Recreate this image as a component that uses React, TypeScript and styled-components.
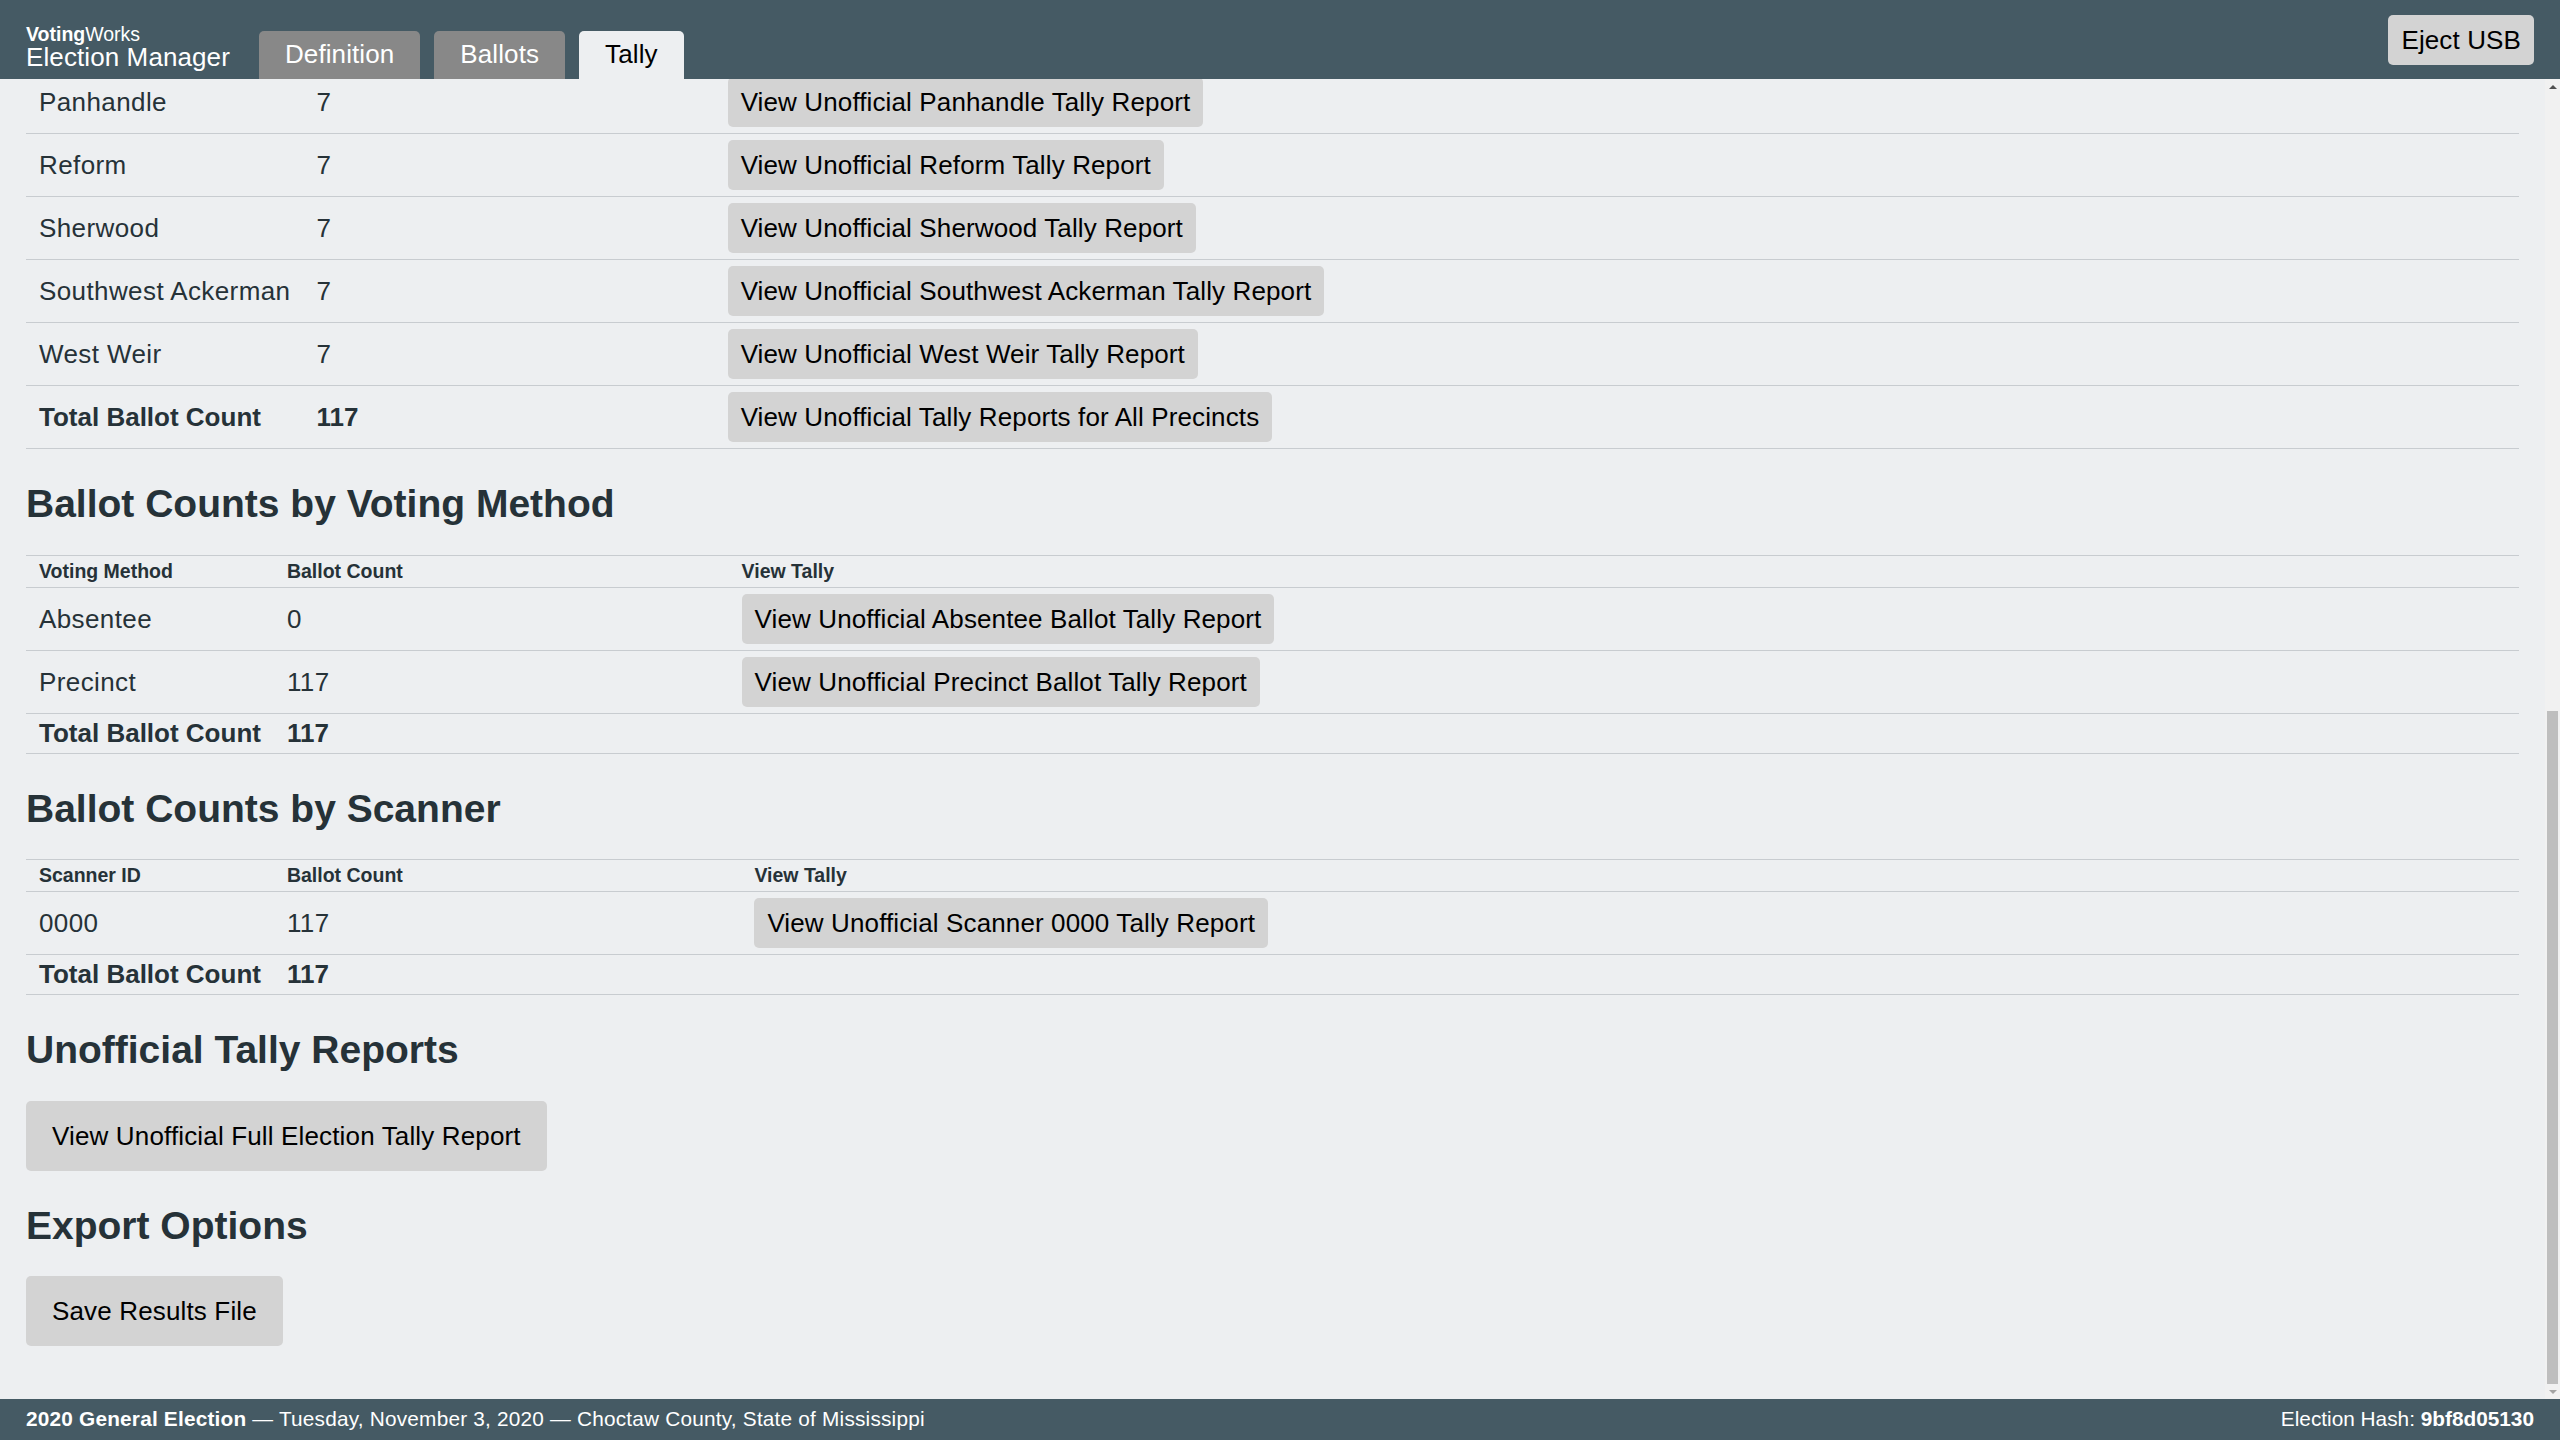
import React, { useLayoutEffect, useRef, useState } from 'react';
import styled, { createGlobalStyle } from 'styled-components';

const GlobalStyle = createGlobalStyle`
  html, body {
    margin: 0;
    height: 100%;
  }
  body {
    font-family: "Liberation Sans", Arial, Helvetica, sans-serif;
    font-size: 26px;
    color: #263238;
    background: #edeff1;
  }
  #root {
    height: 100%;
  }
`;

const Screen = styled.div`
  display: flex;
  flex-direction: column;
  height: 100%;
`;

const Header = styled.header`
  display: flex;
  align-items: flex-end;
  flex-shrink: 0;
  height: 79px;
  padding: 0 26px;
  box-sizing: border-box;
  background: #455a64;
  color: #ffffff;
`;

const Brand = styled.div`
  margin-bottom: 9px;
  line-height: 1;
`;

const BrandOrg = styled.div`
  font-size: 19.5px;
  strong {
    font-weight: 700;
  }
`;

const BrandApp = styled.div`
  font-size: 26px;
  letter-spacing: 0.1px;
`;

const Tabs = styled.nav`
  display: flex;
  gap: 14px;
  margin-left: 29px;
`;

const Tab = styled.a<{ $active?: boolean }>`
  display: block;
  padding: 8.5px 26px;
  line-height: 1.2;
  letter-spacing: 0.1px;
  border-radius: 5px 5px 0 0;
  background: ${(p) => (p.$active ? '#edeff1' : '#888888')};
  color: ${(p) => (p.$active ? '#000000' : '#ffffff')};
  text-decoration: none;
  cursor: pointer;
`;

const Button = styled.button<{ $big?: boolean }>`
  display: inline-block;
  border: none;
  border-radius: 5px;
  background: #d3d3d3;
  color: #000000;
  font-family: inherit;
  font-size: 26px;
  line-height: 1;
  letter-spacing: ${(p) => (p.$big ? '0.15px' : '0.12px')};
  white-space: nowrap;
  padding: ${(p) => (p.$big ? '22px 26px' : '12px 13px')};
  cursor: pointer;
`;

const HeaderButton = styled(Button)`
  margin-left: auto;
  align-self: center;
`;

const Body = styled.div`
  flex: 1;
  display: flex;
  min-height: 0;
`;

const Main = styled.main`
  flex: 1;
  overflow-y: scroll;
  padding: 26px 26px 53px;
  scrollbar-width: none;
  &::-webkit-scrollbar {
    display: none;
  }
`;

const Rail = styled.div`
  display: flex;
  flex-direction: column;
  width: 15px;
  flex-shrink: 0;
  background: #f1f1f1;
`;

const RailArrow = styled.div<{ $down?: boolean; $disabled?: boolean }>`
  height: 15px;
  display: flex;
  align-items: center;
  justify-content: center;
  &::before {
    content: '';
    width: 0;
    height: 0;
    border-left: 4px solid transparent;
    border-right: 4px solid transparent;
    ${(p) =>
      p.$down
        ? `border-top: 4px solid ${p.$disabled ? '#a3a3a3' : '#505050'};`
        : `border-bottom: 4px solid ${p.$disabled ? '#a3a3a3' : '#505050'};`}
  }
`;

const RailTrack = styled.div`
  flex: 1;
  position: relative;
`;

const RailThumb = styled.div`
  position: absolute;
  left: 2px;
  right: 2px;
  background: #bebebe;
`;

const SectionHeading = styled.h2<{ $first?: boolean }>`
  font-size: 39px;
  font-weight: 700;
  line-height: 1.2;
  margin: ${(p) => (p.$first ? '0' : '32px')} 0 27px;
`;

const Table = styled.table`
  width: 100%;
  border-collapse: collapse;
`;

const Th = styled.th<{ $narrow?: boolean }>`
  font-size: 19.5px;
  font-weight: 700;
  line-height: 1;
  text-align: left;
  padding: 5.5px 13px;
  border-top: 1px solid #c8ccd0;
  border-bottom: 1px solid #c8ccd0;
  white-space: nowrap;
  width: ${(p) => (p.$narrow ? '1%' : 'auto')};
`;

const Td = styled.td<{ $bold?: boolean }>`
  line-height: 1;
  padding: ${(p) => (p.$bold ? '6.5px' : '6px')} 13px;
  vertical-align: middle;
  border-bottom: 1px solid #c8ccd0;
  white-space: nowrap;
  letter-spacing: ${(p) => (p.$bold ? '0' : '0.4px')};
  font-weight: ${(p) => (p.$bold ? 700 : 400)};
`;

const ButtonBlock = styled.div`
  margin: 0;
`;

const Footer = styled.footer`
  display: flex;
  justify-content: space-between;
  flex-shrink: 0;
  padding: 8px 26px;
  background: #455a64;
  color: #ffffff;
  font-size: 20.8px;
  line-height: 1.2;
`;

const FooterInfo = styled.div`
  letter-spacing: 0.2px;
`;

type CountRow = { label: string; count: number; report: string };

const precincts: CountRow[] = [
  ['Ackerman', 5],
  ['Bethel', 5],
  ['Bywy', 4],
  ['Chester', 5],
  ['District 5', 5],
  ['East Ackerman', 5],
  ['East Weir', 5],
  ['Fentress', 4],
  ['French Camp', 5],
  ['Hebron', 5],
  ['Kenago', 5],
  ['Liberty', 5],
  ['Mashulaville', 5],
  ['McCool', 4],
  ['Mt. Olive', 5],
  ['North Ackerman', 5],
  ['Northwest Ackerman', 5],
  ['Panhandle', 7],
  ['Reform', 7],
  ['Sherwood', 7],
  ['Southwest Ackerman', 7],
  ['West Weir', 7],
].map(([name, count]) => ({
  label: name as string,
  count: count as number,
  report: `View Unofficial ${name} Tally Report`,
}));

const votingMethods: CountRow[] = [
  { label: 'Absentee', count: 0, report: 'View Unofficial Absentee Ballot Tally Report' },
  { label: 'Precinct', count: 117, report: 'View Unofficial Precinct Ballot Tally Report' },
];

const scanners: CountRow[] = [
  { label: '0000', count: 117, report: 'View Unofficial Scanner 0000 Tally Report' },
];

interface CountTableProps {
  labelHeading: string;
  rows: CountRow[];
  totalReport?: string;
}

function CountTable({ labelHeading, rows, totalReport }: CountTableProps) {
  const total = rows.reduce((sum, r) => sum + r.count, 0);
  return (
    <Table>
      <thead>
        <tr>
          <Th $narrow>{labelHeading}</Th>
          <Th>Ballot Count</Th>
          <Th>View Tally</Th>
        </tr>
      </thead>
      <tbody>
        {rows.map((row) => (
          <tr key={row.label}>
            <Td>{row.label}</Td>
            <Td>{row.count}</Td>
            <Td>
              <Button>{row.report}</Button>
            </Td>
          </tr>
        ))}
        <tr>
          <Td $bold>Total Ballot Count</Td>
          <Td $bold>{total}</Td>
          <Td>{totalReport && <Button>{totalReport}</Button>}</Td>
        </tr>
      </tbody>
    </Table>
  );
}

type ThumbBox = { top: number; height: number; atEnd: boolean };

export default function App() {
  const mainRef = useRef<HTMLElement>(null);
  const trackRef = useRef<HTMLDivElement>(null);
  const [thumb, setThumb] = useState<ThumbBox>({ top: 0, height: 0, atEnd: false });

  const measure = () => {
    const main = mainRef.current;
    const track = trackRef.current;
    if (!main || !track) return;
    const trackHeight = track.clientHeight;
    setThumb({
      top: (trackHeight * main.scrollTop) / main.scrollHeight,
      height: (trackHeight * main.clientHeight) / main.scrollHeight,
      atEnd: main.scrollTop + main.clientHeight >= main.scrollHeight - 1,
    });
  };

  useLayoutEffect(() => {
    // the screen is shown scrolled to the end of the tally page
    if (mainRef.current) {
      mainRef.current.scrollTop = mainRef.current.scrollHeight;
    }
    measure();
  }, []);

  return (
    <Screen>
      <GlobalStyle />
      <Header>
        <Brand>
          <BrandOrg>
            <strong>Voting</strong>Works
          </BrandOrg>
          <BrandApp>Election Manager</BrandApp>
        </Brand>
        <Tabs>
          <Tab>Definition</Tab>
          <Tab>Ballots</Tab>
          <Tab $active>Tally</Tab>
        </Tabs>
        <HeaderButton>Eject USB</HeaderButton>
      </Header>
      <Body>
        <Main ref={mainRef} onScroll={measure}>
          <SectionHeading $first>Ballot Counts by Precinct</SectionHeading>
          <CountTable
            labelHeading="Precinct"
            rows={precincts}
            totalReport="View Unofficial Tally Reports for All Precincts"
          />
          <SectionHeading>Ballot Counts by Voting Method</SectionHeading>
          <CountTable labelHeading="Voting Method" rows={votingMethods} />
          <SectionHeading>Ballot Counts by Scanner</SectionHeading>
          <CountTable labelHeading="Scanner ID" rows={scanners} />
          <SectionHeading>Unofficial Tally Reports</SectionHeading>
          <ButtonBlock>
            <Button $big>View Unofficial Full Election Tally Report</Button>
          </ButtonBlock>
          <SectionHeading>Export Options</SectionHeading>
          <ButtonBlock>
            <Button $big>Save Results File</Button>
          </ButtonBlock>
        </Main>
        <Rail>
          <RailArrow $disabled={thumb.top <= 0} />
          <RailTrack ref={trackRef}>
            <RailThumb style={{ top: thumb.top, height: thumb.height }} />
          </RailTrack>
          <RailArrow $down $disabled={thumb.atEnd} />
        </Rail>
      </Body>
      <Footer>
        <FooterInfo>
          <strong>2020 General Election</strong> — Tuesday, November 3, 2020 —
          Choctaw County, State of Mississippi
        </FooterInfo>
        <div>
          Election Hash: <strong>9bf8d05130</strong>
        </div>
      </Footer>
    </Screen>
  );
}
